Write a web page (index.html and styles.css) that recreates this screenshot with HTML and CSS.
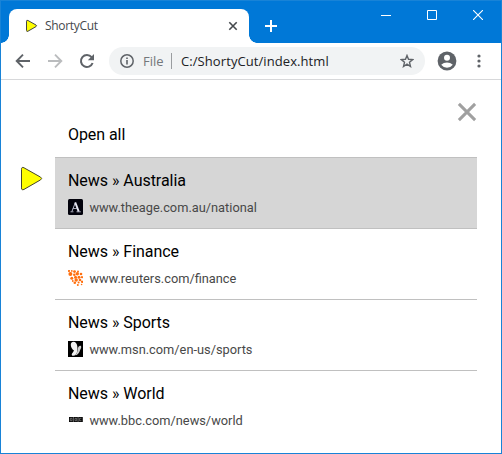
FILE: index.html
```html
<!DOCTYPE html>
<html lang="en">
<head>
<meta charset="utf-8">
<title>ShortyCut</title>
<link rel="stylesheet" href="styles.css">
</head>
<body>
<div class="window">
  <header class="tabstrip">
    <div class="tab">
      <svg class="tab-icon" width="13" height="14" viewBox="0 0 13 14"><path d="M1.5 2.2Q1.5 .8 3 1.5L11 6Q12.2 6.8 11 7.6L3 12.2Q1.5 12.9 1.5 11.5Z" fill="#ff0" stroke="#444" stroke-width="1"/></svg>
      <span class="tab-title">ShortyCut</span>
      <svg class="tab-close" width="10" height="10" viewBox="0 0 10 10"><path d="M1.3 1.3 8.7 8.7M8.7 1.3 1.3 8.7" stroke="#45494d" stroke-width="1.6"/></svg>
    </div>
    <svg class="new-tab" width="12" height="12" viewBox="0 0 12 12"><path d="M6 0V12M0 6H12" stroke="#fff" stroke-width="2"/></svg>
    <div class="controls">
      <svg width="10" height="10" viewBox="0 0 10 10"><path d="M0 5.5H10" stroke="#fff"/></svg>
      <svg width="10" height="10" viewBox="0 0 10 10"><path d="M.5 .5H9.5V9.5H.5Z" fill="none" stroke="#fff"/></svg>
      <svg width="10" height="10" viewBox="0 0 10 10"><path d="M0 0 10 10M10 0 0 10" stroke="#fff" stroke-width="1.1"/></svg>
    </div>
  </header>
  <nav class="toolbar">
    <svg class="back" width="16" height="16" viewBox="0 0 16 16"><path d="M15 8H2M8 1.7 1.7 8 8 14.3" fill="none" stroke="#5f6368" stroke-width="1.9"/></svg>
    <svg class="forward" width="16" height="16" viewBox="0 0 16 16"><path d="M1 8H14M8 1.7 14.3 8 8 14.3" fill="none" stroke="#babcbe" stroke-width="1.9"/></svg>
    <svg class="reload" width="16" height="16" viewBox="0 0 16 16"><path d="M13.6 10A6 6 0 1 1 12.6 4.2" fill="none" stroke="#5f6368" stroke-width="2"/><path d="M15 1V7.2H8.8Z" fill="#5f6368"/></svg>
    <div class="omnibox">
      <svg class="info" width="14" height="14" viewBox="0 0 14 14"><circle cx="7" cy="7" r="6.2" fill="none" stroke="#5f6368" stroke-width="1.5"/><path d="M7 6V10.6M7 3.4V5" stroke="#5f6368" stroke-width="1.6"/></svg>
      <span class="scheme">File</span>
      <span class="divider"></span>
      <span class="address">C:/ShortyCut/index.html</span>
      <svg class="star" width="14" height="14" viewBox="0 0 14 14"><path d="M7 1.5 8.5 5.3 12.7 5.6 9.5 8.3 10.5 12.5 7 10.2 3.5 12.5 4.5 8.3 1.3 5.6 5.5 5.3Z" fill="none" stroke="#5f6368" stroke-width="1.4"/></svg>
    </div>
    <svg class="avatar" width="20" height="20" viewBox="0 0 20 20"><circle cx="10" cy="10" r="9.4" fill="#5f6368"/><circle cx="10" cy="6.8" r="3" fill="#fff"/><path d="M4.2 13.8Q6.6 11.5 10 11.5T15.8 13.8Q13.6 16.8 10 16.8T4.2 13.8Z" fill="#fff"/></svg>
    <svg class="more" width="4" height="14" viewBox="0 0 4 14"><g fill="#5f6368"><circle cx="2" cy="2" r="1.6"/><circle cx="2" cy="7" r="1.6"/><circle cx="2" cy="12" r="1.6"/></g></svg>
  </nav>
  <main class="page">
    <aside class="logo">
      <svg width="24" height="26" viewBox="0 0 24 26"><path d="M1.5 3.3Q1.5 .5 4 1.8L20.5 11.1Q22.8 12.5 20.5 13.9L4 23.4Q1.5 24.7 1.5 21.9Z" fill="#ff0" stroke="#454530" stroke-width="1"/></svg>
    </aside>
    <section class="list">
      <div class="close-row"><svg width="20" height="20" viewBox="0 0 20 20"><path d="M1.9 1.9 18.1 18.1M18.1 1.9 1.9 18.1" stroke="#a0a0a0" stroke-width="3"/></svg></div>
      <div class="open-all">Open all</div>
      <article class="item selected">
        <div class="name">News » Australia</div>
        <div class="link"><svg width="15" height="16" viewBox="0 0 15 16"><rect width="15" height="16" rx="1.5" fill="#02020c"/><path d="M3.9 12.5 7.2 4" stroke="#b5b9cc" stroke-width="1"/><path d="M7.2 3.3 10.7 12.7" stroke="#e6e6f2" stroke-width="1.9"/><path d="M4.8 9.5H9M2.5 12.8H5.5M8.5 12.8H12.8" stroke="#b5b8c8" stroke-width=".9"/></svg><span>www.theage.com.au/national</span></div>
      </article>
      <article class="item">
        <div class="name">News » Finance</div>
        <div class="link"><svg width="15" height="16" viewBox="0 0 15 16"><g fill="#ff7010"><circle cx="1" cy="1" r="1.1"/><circle cx="3.8" cy=".9" r=".9"/><circle cx="6.5" cy="1.6" r="1.4"/><circle cx="10" cy="1.5" r="1"/><circle cx="2.4" cy="4" r="2"/><circle cx="6.3" cy="4.8" r="1.3"/><circle cx="9.3" cy="3.8" r="1.7"/><circle cx="13" cy="4" r="1.3"/><circle cx="3.8" cy="8.2" r="1.5"/><circle cx="7.5" cy="7.3" r="1.5"/><circle cx="11" cy="7.2" r="1.5"/><circle cx="14" cy="7.2" r="1.1"/><circle cx="4.8" cy="11" r=".9"/><circle cx="8.2" cy="10" r="1.7"/><circle cx="12" cy="10" r="1.3"/><circle cx="6.8" cy="12.8" r="1.3"/><circle cx="10.6" cy="12.4" r="1"/><circle cx="14.1" cy="11.8" r="1.2"/><circle cx="9.8" cy="15" r="1"/><circle cx="13.6" cy="14.5" r=".8"/></g></svg><span>www.reuters.com/finance</span></div>
      </article>
      <article class="item">
        <div class="name">News » Sports</div>
        <div class="link"><svg width="15" height="16" viewBox="0 0 15 16"><rect width="15" height="16" fill="#000"/><path d="M3.6 1.4C5.8-.2 9.2 1.5 9.4 6L9.2 10.3C8.9 13 7.4 14.7 5 14.8 3.2 14.6 3.4 12.6 5 11.2L6 9.6C3.2 8.2 1.8 3.4 3.6 1.4Z" fill="#f2f2f2"/><path d="M9.7 7.6C10.4 5 12 4.1 13 5.1 13.9 6.5 12.2 8.6 11.7 10.2 11 12.2 9 14.4 7.4 14.3 9.3 12.2 9.5 10 9.7 7.6Z" fill="#d0d0d0"/></svg><span>www.msn.com/en-us/sports</span></div>
      </article>
      <article class="item">
        <div class="name">News » World</div>
        <div class="link"><svg width="15" height="16" viewBox="0 0 15 16"><path d="M1 5H14.8V10H1Z" fill="#080808"/><path d="M5.4 5V10M10.1 5V10" stroke="#bbb" stroke-width=".5"/><path d="M2.3 6.3H4V8.7H2.3ZM7 6.3H8.7V8.7H7ZM13.4 6.3H11.6V8.7H13.4" fill="none" stroke="#999" stroke-width=".6"/></svg><span>www.bbc.com/news/world</span></div>
      </article>
    </section>
  </main>
</div>
</body>
</html>
```
FILE: styles.css
```css
* { box-sizing: border-box; }
body { margin: 0; background: #fff; }
svg { display: block; flex: none; }
.window {
  width: 502px; height: 454px; overflow: hidden;
  border: 1px solid #1883d7;
  font-family: Roboto, sans-serif;
}
.tabstrip {
  display: flex; height: 42px; padding-left: 8px;
  background: #0078d7;
}
.tab {
  display: flex; align-items: center; position: relative;
  width: 240px; height: 34px; margin-top: 8px; padding: 0 11px 0 16px;
  background: #fff; border-radius: 8px 8px 0 0;
}
.tab::before, .tab::after {
  content: ""; position: absolute; bottom: 0; width: 8px; height: 8px;
}
.tab::before { left: -8px; background: radial-gradient(circle at 0 0, #0078d7 7.5px, #fff 8px); }
.tab::after { right: -8px; background: radial-gradient(circle at 100% 0, #0078d7 7.5px, #fff 8px); }
.tab-title {
  flex: 1; margin-left: 7px;
  font: 12px/16px "Open Sans", sans-serif; letter-spacing: -0.3px; color: #45494d;
}
.new-tab { margin: 19px 0 0 16px; }
.controls { display: flex; gap: 36px; margin: 9px 18px 0 auto; }
.toolbar {
  display: flex; align-items: center; height: 37px;
  padding-left: 14px; border-bottom: 1px solid #d7d8da;
}
.forward, .reload { margin-left: 16px; }
.omnibox {
  display: flex; align-items: center;
  width: 316px; height: 28px; margin-left: 14px; padding: 0 11px;
  border-radius: 14px; background: #f1f3f4;
  font: 13px/20px "Open Sans", sans-serif; color: #202124;
}
.scheme { width: 22px; margin-left: 9px; color: #74777b; }
.divider { width: 1px; height: 16px; margin: 0 9px 0 6px; background: #9a9da0; }
.address { flex: 1; letter-spacing: 0.08px; white-space: nowrap; }
.avatar { margin-left: 12px; }
.more { margin-left: 20px; }
.page { display: flex; }
.logo { width: 54px; padding: 86px 0 0 19px; }
.list { width: 422px; }
.close-row { display: flex; justify-content: flex-end; height: 42px; padding-top: 22px; }
.open-all { height: 35px; padding: 3px 13px 0; font-size: 16px; line-height: 20px; letter-spacing: -0.06px; color: #000; }
.item { height: 71px; padding: 13px 13px 0; border-top: 1px solid #c0c0c0; }
.selected { background: #d6d6d6; }
.name { font-size: 16px; line-height: 20px; letter-spacing: -0.04px; color: #000; }
.link { display: flex; align-items: center; gap: 6px; height: 16px; margin-top: 8px; font-size: 12.8px; line-height: 16px; color: #484848; }
.link span { padding: 1px 0 0 0.4px; }
```
